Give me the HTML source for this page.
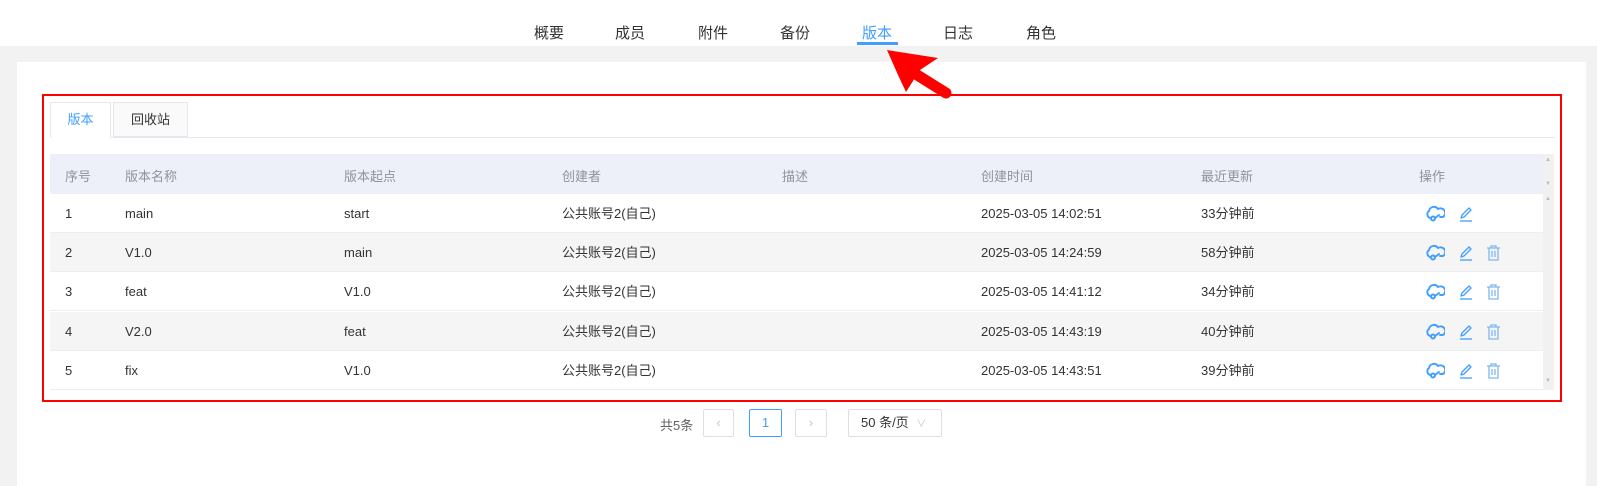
<!DOCTYPE html>
<html><head><meta charset="utf-8"><style>
*{margin:0;padding:0;box-sizing:border-box}
body{width:1597px;height:486px;background:#fff;font-family:"Liberation Sans","Noto Sans CJK SC",sans-serif;font-size:13px;color:#333;position:relative;overflow:hidden}
.abs{position:absolute}
.nav{top:22px;font-size:15px;color:#333}
.gray{left:0;top:46px;width:1597px;height:440px;background:#f2f2f2}
.panel{left:17px;top:62px;width:1569px;height:424px;background:#fff}
.red{left:42px;top:94px;width:1520px;height:308px;border:2px solid #f00}
.th{top:154px;left:50px;width:1494px;height:40px;background:#edf0f8}
.hd{color:#909399;top:166px}
.row{left:50px;width:1494px;height:39px}
.cell{line-height:39px}
.ic{position:absolute}
.btn{border:1px solid #dcdfe6;background:#fff;height:28px;top:409px;border-radius:2px;text-align:center;line-height:26px;color:#c0c4cc}
</style></head><body>
<div class="abs nav" style="left:534px">概要</div>
<div class="abs nav" style="left:615px">成员</div>
<div class="abs nav" style="left:698px">附件</div>
<div class="abs nav" style="left:780px">备份</div>
<div class="abs nav" style="left:862px;color:#409eff">版本</div>
<div class="abs nav" style="left:943px">日志</div>
<div class="abs nav" style="left:1026px">角色</div>
<div class="abs gray"></div>
<div class="abs" style="left:857px;top:42px;width:41px;height:3px;background:#409eff"></div>
<div class="abs panel"></div>

<div class="abs" style="left:50px;top:102px;width:61px;height:36px;border:1px solid #e4e7ed;border-bottom:1px solid #fff;background:#fff;color:#409eff;text-align:center;line-height:34px;z-index:2">版本</div>
<div class="abs" style="left:113px;top:102px;width:75px;height:35px;border:1px solid #e4e7ed;background:#fafafa;text-align:center;line-height:34px">回收站</div>
<div class="abs" style="left:50px;top:137px;width:1504px;height:1px;background:#e4e7ed"></div>

<div class="abs th"></div>
<div class="abs" style="left:1543px;top:154px;width:11px;height:236px;background:#f1f1f1"></div>
<div class="abs" style="left:1545px;top:157px;color:#bbb;font-size:6px">▲</div>
<div class="abs" style="left:1545px;top:181px;color:#bbb;font-size:6px">▼</div>
<div class="abs" style="left:1545px;top:196px;color:#bbb;font-size:6px">▲</div>
<div class="abs" style="left:1545px;top:378px;color:#bbb;font-size:6px">▼</div>
<div class="abs hd" style="left:65px">序号</div>
<div class="abs hd" style="left:125px">版本名称</div>
<div class="abs hd" style="left:344px">版本起点</div>
<div class="abs hd" style="left:562px">创建者</div>
<div class="abs hd" style="left:782px">描述</div>
<div class="abs hd" style="left:981px">创建时间</div>
<div class="abs hd" style="left:1201px">最近更新</div>
<div class="abs hd" style="left:1419px">操作</div>

<svg width="0" height="0" style="position:absolute"><defs>
<g id="cl" fill="none" stroke="#409eff" stroke-width="1.9" stroke-linecap="round"><path d="M5 13 A4 4 0 0 1 4 6 A5 5 0 0 1 13 4 A4 4 0 0 1 18 12 L15 12"/><circle cx="8" cy="13.5" r="2"/><path d="M10 13 L14 10"/></g>
<g id="ed" fill="none" stroke="#409eff" stroke-width="1.3" stroke-linejoin="round"><path d="M4 13 L5 10 L12 3 L14 5 L7 12 Z"/><path d="M3 16 L15 16"/></g>
<g id="tr" fill="none" stroke="#7db7f5" stroke-width="1.3"><path d="M2 4 L15 4 M6 4 L6 2 L11 2 L11 4 M4 4 L4 16 L13 16 L13 4 M7 7 L7 13 M10 7 L10 13"/></g>
</defs></svg>

<div id="rows"></div>
<script>
var d=[["1","main","start","2025-03-05 14:02:51","33分钟前",0],["2","V1.0","main","2025-03-05 14:24:59","58分钟前",1],["3","feat","V1.0","2025-03-05 14:41:12","34分钟前",1],["4","V2.0","feat","2025-03-05 14:43:19","40分钟前",1],["5","fix","V1.0","2025-03-05 14:43:51","39分钟前",1]];
var h="";
d.forEach(function(r,i){var t=194+i*39.2;
h+='<div class="abs row" style="top:'+t+'px;background:'+(i%2?'#f5f5f5':'#fff')+';width:1493px;border-bottom:1px solid #ebeef5"></div>';
var c=[[65,r[0]],[125,r[1]],[344,r[2]],[562,'公共账号2(自己)'],[981,r[3]],[1201,r[4]]];
c.forEach(function(x){h+='<div class="abs cell" style="left:'+x[0]+'px;top:'+t+'px">'+x[1]+'</div>'});
var y=t+11;
h+='<svg class="ic" style="left:1425px;top:'+y+'px" width="20" height="18"><use href="#cl"/></svg>';
h+='<svg class="ic" style="left:1457px;top:'+y+'px" width="18" height="18"><use href="#ed"/></svg>';
if(r[5])h+='<svg class="ic" style="left:1485px;top:'+y+'px" width="18" height="18"><use href="#tr"/></svg>';
});
document.getElementById("rows").innerHTML=h;
</script>

<div class="abs red"></div>

<div class="abs" style="left:660px;top:415px;color:#606266">共5条</div>
<div class="abs btn" style="left:703px;width:31px">&lsaquo;</div>
<div class="abs btn" style="left:749px;width:33px;border-color:#409eff;color:#409eff">1</div>
<div class="abs btn" style="left:795px;width:32px">&rsaquo;</div>
<div class="abs btn" style="left:848px;width:94px;color:#333;text-align:left;padding-left:12px">50 条/页 <span style="color:#c0c4cc;font-size:10px;margin-left:4px">∨</span></div>

<svg class="abs" style="left:0;top:0" width="1597" height="486">
<polygon points="887,50 938,58 920,70 906,92 898,75" fill="#f00"/>
<line x1="906" y1="68" x2="946" y2="93" stroke="#f00" stroke-width="11" stroke-linecap="round"/>
</svg>
</body></html>
